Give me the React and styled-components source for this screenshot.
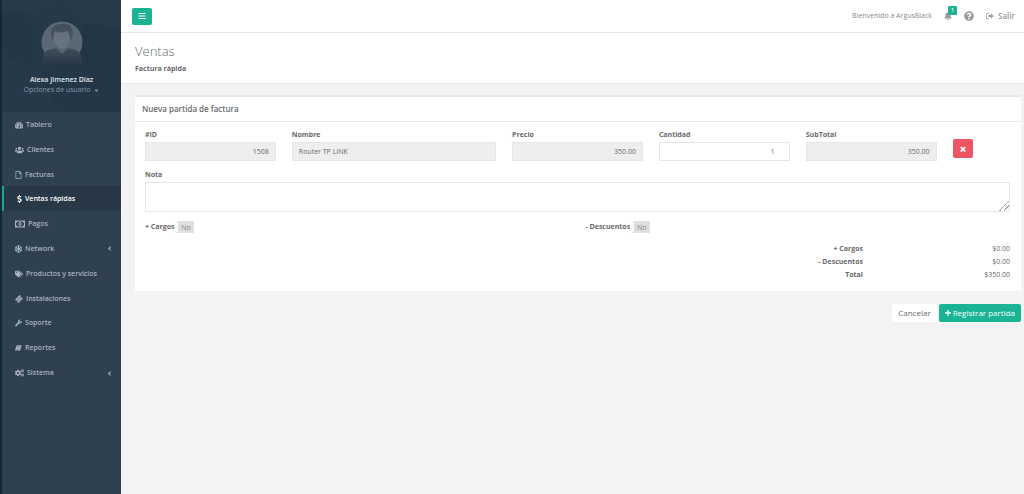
import styled, { createGlobalStyle, css } from "styled-components";
import { useState } from "react";
import {
  FaBars,
  FaBell,
  FaCaretDown,
  FaCogs,
  FaDollarSign,
  FaPlus,
  FaQuestionCircle,
  FaRegFile,
  FaSnowflake,
  FaTags,
  FaUsers,
  FaWrench,
  FaAngleLeft,
} from "react-icons/fa";

const GaugeIcon = () => (
  <svg viewBox="0 0 16 16" fill="currentColor">
    <path
      fillRule="evenodd"
      d="M8 2a8 8 0 0 0-6.700 12.300c.2.400.5.500.9.500h11.600c.4 0 .7-.1.900-.5A8 8 0 0 0 8 2ZM8 3.200a1.200 1.200 0 1 1 0 2.400a1.200 1.200 0 0 1 0-2.400ZM3.800 5a1.200 1.200 0 1 1 0 2.400a1.200 1.200 0 0 1 0-2.400ZM12.200 5a1.200 1.200 0 1 1 0 2.400a1.200 1.200 0 0 1 0-2.400ZM2.300 9a1.200 1.200 0 1 1 0 2.400a1.200 1.200 0 0 1 0-2.400ZM13.700 9a1.200 1.200 0 1 1 0 2.400a1.200 1.200 0 0 1 0-2.400ZM9.400 6.200l.8.300-1 3.700a1.800 1.800 0 1 1-.9-.3Z"
    />
  </svg>
);

const MoneyIcon = () => (
  <svg viewBox="0 0 20 14" fill="currentColor">
    <path
      fillRule="evenodd"
      d="M0 0h20v14H0ZM4.500 2A2.500 2.500 0 0 1 2 4.500v5A2.500 2.500 0 0 1 4.500 12h11A2.500 2.500 0 0 1 18 9.500v-5A2.500 2.500 0 0 1 15.500 2Z"
    />
    <path
      fillRule="evenodd"
      d="M10 3a3.300 4 0 0 1 0 8a3.300 4 0 0 1 0-8ZM9.500 4.500L8.200 5.700l.5.500.6-.4v3H8.300v.8h3.300v-.8h-1V4.500Z"
    />
  </svg>
);

const TicketIcon = () => (
  <svg viewBox="0 0 16 16" fill="currentColor">
    <path
      fillRule="evenodd"
      d="M10 .700l1.500 1.500a1.600 1.600 0 0 0 2.300 2.300L15.300 6c.5.500.5 1 0 1.500l-7.800 7.800c-.5.500-1 .5-1.500 0l-1.500-1.500a1.600 1.600 0 0 0-2.300-2.300L.7 10c-.5-.5-.5-1 0-1.500L8.500.7c.5-.5 1-.5 1.500 0ZM9 3.700L3.700 9 7 12.300 12.300 7Z"
    />
    <path d="M9 4.500L11.500 7 7 11.500 4.500 9Z" />
  </svg>
);

const BookIcon = () => (
  <svg viewBox="0 0 16 16" fill="currentColor">
    <path
      fillRule="evenodd"
      d="M5 1.500h8.800c1 0 1.500.7 1.200 1.700l-3 9.800c-.3 1-1 1.500-2 1.500H2.500C1 14.500 0 13 .5 11.500L3 3.200C3.400 2 4 1.500 5 1.500ZM6 4.300l-.3 1h6l.3-1ZM5.300 6.600l-.3 1h6l.3-1ZM2 11.800c-.2.700.1 1.200.8 1.200h7.200l.5-1.200Z"
    />
  </svg>
);

const SignOutIcon = () => (
  <svg viewBox="0 0 16 16" fill="currentColor">
    <path d="M6 2H3A3 3 0 0 0 0 5v6a3 3 0 0 0 3 3h3v-1.400H3.200A1.700 1.700 0 0 1 1.500 11V5.100a1.700 1.700 0 0 1 1.700-1.700H6Z" />
    <path d="M9.500 2.500v3.300H5v4.400h4.500v3.300L15.500 8Z" />
  </svg>
);

const TimesIcon = () => (
  <svg viewBox="0 0 1792 1792" fill="currentColor">
    <path d="M1490 1322q0 40-28 68l-136 136q-28 28-68 28t-68-28l-294-294-294 294q-28 28-68 28t-68-28l-136-136q-28-28-28-68t28-68l294-294-294-294q-28-28-28-68t28-68l136-136q28-28 68-28t68 28l294 294 294-294q28-28 68-28t68 28l136 136q28 28 28 68t-28 68l-294 294 294 294q28 28 28 68z" />
  </svg>
);

const menu = [
  { name: "Tablero", icon: GaugeIcon, size: 8 },
  { name: "Clientes", icon: FaUsers, size: 9 },
  { name: "Facturas", icon: FaRegFile, size: 7 },
  { name: "Ventas rápidas", icon: FaDollarSign, size: 5, active: true },
  { name: "Pagos", icon: MoneyIcon, size: 10 },
  { name: "Network", icon: FaSnowflake, size: 7 },
  { name: "Productos y servicios", icon: FaTags, size: 8 },
  { name: "Instalaciones", icon: TicketIcon, size: 8 },
  { name: "Soporte", icon: FaWrench, size: 7 },
  { name: "Reportes", icon: BookIcon, size: 7 },
  { name: "Sistema", icon: FaCogs, size: 9 },
];

const withSubmenu = ["Network", "Sistema"];

const fields = [
  { id: "id", label: "#ID", value: "1508", span: 2, right: true },
  { id: "nombre", label: "Nombre", value: "Router TP LINK", span: 3 },
  { id: "precio", label: "Precio", value: "350.00", span: 2, right: true },
  { id: "cantidad", label: "Cantidad", span: 2, right: true, editable: true },
  { id: "subtotal", label: "SubTotal", value: "350.00", span: 2, right: true },
];

const totals = [
  { label: "+ Cargos", value: "$0.00" },
  { label: "- Descuentos", value: "$0.00" },
  { label: "Total", value: "$350.00" },
];

const Avatar = () => (
  <AvatarSvg viewBox="0 0 42 44" role="img" aria-label="Alexa Jimenez Díaz">
    <defs>
      <linearGradient id="suit" x1="0" y1="0" x2="0" y2="1">
        <stop offset="0" stopColor="#414e5b" />
        <stop offset="1" stopColor="#283848" />
      </linearGradient>
      <linearGradient id="hair" x1="0" y1="0" x2="0" y2="1">
        <stop offset="0" stopColor="#404c58" />
        <stop offset="1" stopColor="#4d5965" />
      </linearGradient>
    </defs>
    <circle cx="21" cy="21" r="20.5" fill="#5a6876" />
    <path
      d="M1 43C1 36 2 31 7 29L15 27H27L35 29C40 31 41 36 41 43Z"
      fill="url(#suit)"
    />
    <path d="M15 27L21 33L27 27L25 22H17Z" fill="#566370" />
    <path
      d="M12 14C12 9 15 7 21 7C27 7 30 9 30 14C30 21 26 28 21 28C16 28 12 21 12 14Z"
      fill="#66737f"
    />
    <path
      d="M11 18C7 8 13 3 20 3C29 1 34 8 31 18L29 20C29 15 28 12 26 10C22 12 16 12 14 10C13 12 13 15 12 20Z"
      fill="url(#hair)"
    />
  </AvatarSvg>
);

const Pattern = () => (
  <PatternSvg viewBox="0 0 120 112" preserveAspectRatio="none" aria-hidden>
    <path d="M0 0H62L28 14L0 12Z" fill="#273a4a" />
    <path d="M62 0H120V30L84 22Z" fill="#263a4a" />
    <path d="M62 0L84 22L66 60L28 14Z" fill="#253949" />
    <path d="M0 12L28 14L38 70L0 54Z" fill="#243747" />
    <path d="M84 22L120 30V84L66 60Z" fill="#243646" />
    <path d="M0 54L38 70L58 112H0Z" fill="#263949" />
    <path d="M66 60L120 84V112H58L38 70Z" fill="#253747" />
  </PatternSvg>
);

const Toggle = ({ id, label }) => (
  <ToggleLabel htmlFor={id}>
    {label}
    <ToggleBox>
      <input id={id} type="checkbox" />
      <span>No</span>
    </ToggleBox>
  </ToggleLabel>
);

const App = () => {
  const [quantity, setQuantity] = useState("1");
  const [note, setNote] = useState("");

  return (
    <Wrapper>
      <GlobalStyle />
      <Sidebar>
        <Profile>
          <Pattern />
          <Avatar />
          <strong>Alexa Jimenez Díaz</strong>
          <ProfileButton type="button">
            Opciones de usuario <FaCaretDown />
          </ProfileButton>
        </Profile>
        <Menu>
          {menu.map(({ name, icon: Icon, size, active }) => (
            <MenuItem key={name} $active={active}>
              <MenuLink href="#" $active={active}>
                <MenuIcon $size={size}>
                  <Icon />
                </MenuIcon>
                <span>{name}</span>
                {withSubmenu.includes(name) && <FaAngleLeft />}
              </MenuLink>
            </MenuItem>
          ))}
        </Menu>
      </Sidebar>
      <Page>
        <TopBar>
          <IconButton type="button" aria-label="Menú">
            <FaBars />
          </IconButton>
          <TopLinks>
            <span>Bienvenido a ArgusBlack</span>
            <TopLink href="#" aria-label="Notificaciones">
              <FaBell />
              <Badge>1</Badge>
            </TopLink>
            <TopLink href="#" aria-label="Ayuda" $large>
              <FaQuestionCircle />
            </TopLink>
            <TopLink href="#">
              <SignOutIcon />
              Salir
            </TopLink>
          </TopLinks>
        </TopBar>
        <Heading>
          <h2>Ventas</h2>
          <strong>Factura rápida</strong>
        </Heading>
        <Content>
          <Card>
            <CardTitle>Nueva partida de factura</CardTitle>
            <CardBody>
              <FieldRow>
                {fields.map((f) => (
                  <Field key={f.id} $span={f.span}>
                    <label htmlFor={f.id}>{f.label}</label>
                    {f.editable ? (
                      <Input
                        id={f.id}
                        type="number"
                        value={quantity}
                        onChange={(e) => setQuantity(e.target.value)}
                        $right
                      />
                    ) : (
                      <Input id={f.id} value={f.value} $right={f.right} readOnly />
                    )}
                  </Field>
                ))}
                <RemoveButton type="button" aria-label="Eliminar">
                  <TimesIcon />
                </RemoveButton>
              </FieldRow>
              <Field>
                <label htmlFor="nota">Nota</label>
                <TextArea
                  id="nota"
                  value={note}
                  onChange={(e) => setNote(e.target.value)}
                />
              </Field>
              <ToggleRow>
                <Toggle id="cargos" label="+ Cargos" />
                <Toggle id="descuentos" label="- Descuentos" />
              </ToggleRow>
              <Totals>
                <tbody>
                  {totals.map((t) => (
                    <tr key={t.label}>
                      <th scope="row">{t.label}</th>
                      <td>{t.value}</td>
                    </tr>
                  ))}
                </tbody>
              </Totals>
            </CardBody>
          </Card>
          <Actions>
            <Button type="button">Cancelar</Button>
            <Button type="button" $primary>
              <FaPlus />
              Registrar partida
            </Button>
          </Actions>
        </Content>
      </Page>
    </Wrapper>
  );
};

const GlobalStyle = createGlobalStyle`
  * {
    box-sizing: border-box;
  }

  body {
    margin: 0;
    background-color: #f3f3f4;
    color: #676a6c;
    font-family: "Open Sans", "Noto Sans", sans-serif;
    font-size: 7px;
    line-height: 10px;
  }

  button,
  input,
  textarea {
    font-family: inherit;
    color: inherit;
  }

  a {
    color: inherit;
    text-decoration: none;
  }

  svg {
    flex-shrink: 0;
    width: 1em;
    height: 1em;
  }
`;

const Wrapper = styled.div`
  display: flex;
  min-height: 100vh;
`;

const Sidebar = styled.nav`
  width: 121px;
  flex-shrink: 0;
  background-color: #2f4050;
  border-left: 2px solid #10293a;
`;

const Profile = styled.div`
  position: relative;
  display: flex;
  flex-direction: column;
  align-items: center;
  height: 112px;
  padding-top: 21px;
  background-color: #253848;

  strong {
    position: relative;
    margin-top: 10px;
    color: #dfe4ed;
    font-weight: 600;
  }
`;

const PatternSvg = styled.svg`
  position: absolute;
  inset: 0;
  width: 100%;
  height: 100%;
`;

const AvatarSvg = styled.svg`
  position: relative;
  width: 42px;
  height: 44px;
`;

const ProfileButton = styled.button`
  position: relative;
  display: flex;
  align-items: center;
  gap: 2px;
  padding: 0;
  border: 0;
  background: none;
  color: #8095a8;
  font-size: 7px;
  line-height: 10px;
`;

const Menu = styled.ul`
  display: grid;
  grid-auto-rows: 1fr;
  height: 273px;
  margin: 0;
  padding: 0;
  list-style: none;
`;

const MenuItem = styled.li`
  display: flex;
  ${(props) =>
    props.$active &&
    css`
      background-color: #293846;
      border-left: 2px solid #19aa8d;
    `}
`;

const MenuLink = styled.a`
  display: flex;
  align-items: center;
  gap: 3px;
  flex: 1;
  padding: 1px 8px 0 13px;
  color: ${(props) => (props.$active ? "#ffffff" : "#a7b1c2")};
  font-weight: 600;

  & > span:nth-child(2) {
    flex: 1;
  }
`;

const MenuIcon = styled.span`
  display: flex;

  svg {
    width: ${(props) => props.$size}px;
    height: 8px;
  }
`;

const Page = styled.div`
  flex: 1;
  min-width: 0;
`;

const TopBar = styled.header`
  display: flex;
  align-items: center;
  justify-content: space-between;
  height: 33px;
  padding: 0 9px 0 11px;
  background-color: #ffffff;
  border-bottom: 1px solid #e7eaec;
`;

const IconButton = styled.button`
  display: flex;
  align-items: center;
  justify-content: center;
  width: 20px;
  height: 17px;
  padding: 0;
  border: 0;
  border-radius: 2px;
  background-color: #1ab394;
  color: #ffffff;
  font-size: 8px;
`;

const TopLinks = styled.div`
  display: flex;
  align-items: center;
  gap: 12px;
  color: #888888;
`;

const TopLink = styled.a`
  position: relative;
  display: flex;
  align-items: center;
  gap: 4px;
  color: #999c9e;
  font-size: ${(props) => (props.$large ? "10px" : "8px")};
  font-weight: 600;
`;

const Badge = styled.span`
  position: absolute;
  bottom: 5px;
  left: 4px;
  width: 9px;
  border-radius: 1px;
  background-color: #1ab394;
  color: #ffffff;
  font-size: 5px;
  line-height: 9px;
  text-align: center;
`;

const Heading = styled.div`
  padding: 9px 14px;
  background-color: #ffffff;
  border-bottom: 1px solid #e7eaec;

  h2 {
    margin: 0 0 4px;
    font-size: 13px;
    font-weight: 300;
    line-height: 18px;
  }

  strong {
    display: block;
    font-weight: 700;
  }
`;

const Content = styled.main`
  padding: 11px 3px 0 14px;
`;

const Card = styled.section`
  background-color: #ffffff;
  border-top: 2px solid #e7eaec;
`;

const CardTitle = styled.h5`
  margin: 0;
  padding: 6px 7px;
  border-bottom: 1px solid #e7eaec;
  font-size: 8px;
  font-weight: 600;
  line-height: 12px;
`;

const CardBody = styled.form`
  padding: 8px 11px 10px 10px;
`;

const FieldRow = styled.div`
  display: grid;
  grid-template-columns: repeat(12, 1fr);
  column-gap: 16px;
  margin-bottom: 9px;
`;

const Field = styled.div`
  grid-column: span ${(props) => props.$span || 12};
  display: flex;
  flex-direction: column;
  gap: 2px;

  label {
    font-weight: 700;
  }
`;

const Input = styled.input`
  width: 100%;
  height: 19px;
  padding: 0 6px;
  border: 1px solid #e5e6e7;
  border-radius: 0;
  outline: 0;
  background-color: ${(props) => (props.readOnly ? "#eeeeee" : "#ffffff")};
  font-size: 7px;
  text-align: ${(props) => (props.$right ? "right" : "left")};

  &[type="number"] {
    padding-right: 14px;
  }

  &::-webkit-inner-spin-button {
    appearance: none;
    margin: 0;
  }
`;

const TextArea = styled.textarea`
  display: block;
  width: 100%;
  height: 30px;
  padding: 3px 7px;
  border: 1px solid #e5e6e7;
  outline: 0;
  font-size: 7px;
  resize: vertical;

  &::-webkit-resizer {
    background: linear-gradient(
      135deg,
      transparent 65%,
      #a8a8a8 65%,
      #a8a8a8 70%,
      transparent 70%,
      transparent 80%,
      #a8a8a8 80%,
      #a8a8a8 85%,
      transparent 85%
    );
  }
`;

const RemoveButton = styled(IconButton)`
  height: 19px;
  margin-top: 9px;
  background-color: #ed5565;
`;

const ToggleRow = styled.div`
  display: grid;
  grid-template-columns: 1fr 1fr;
  column-gap: 16px;
  margin: 9px 0;
`;

const ToggleLabel = styled.label`
  display: flex;
  align-items: center;
  gap: 1px;
  font-weight: 700;
`;

const ToggleBox = styled.span`
  position: relative;
  display: flex;
  width: 19px;
  height: 12px;
  border: 1px solid #e2e2e2;
  border-left: 3px solid #fafafa;
  border-radius: 1px;
  background-color: #dedede;
  color: #888888;
  font-weight: 400;

  span {
    flex: 1;
    padding-top: 1px;
    text-align: center;
  }

  input {
    position: absolute;
    inset: 0;
    margin: 0;
    opacity: 0;
  }
`;

const Totals = styled.table`
  width: 100%;
  border-collapse: collapse;
  line-height: 13px;

  th,
  td {
    padding: 0;
    text-align: right;
  }

  td {
    width: 17%;
  }
`;

const Actions = styled.div`
  display: flex;
  justify-content: flex-end;
  gap: 2px;
  padding: 13px 0;
`;

const Button = styled.button`
  display: flex;
  align-items: center;
  gap: 2px;
  height: 18px;
  padding: 0 5px;
  border: 1px solid ${(props) => (props.$primary ? "#1ab394" : "#ffffff")};
  border-radius: 2px;
  background-color: ${(props) => (props.$primary ? "#1ab394" : "#ffffff")};
  color: ${(props) => (props.$primary ? "#ffffff" : "#676a6c")};
  font-size: 8px;
  line-height: 10px;

  svg {
    width: 6px;
  }
`;

export default App;
